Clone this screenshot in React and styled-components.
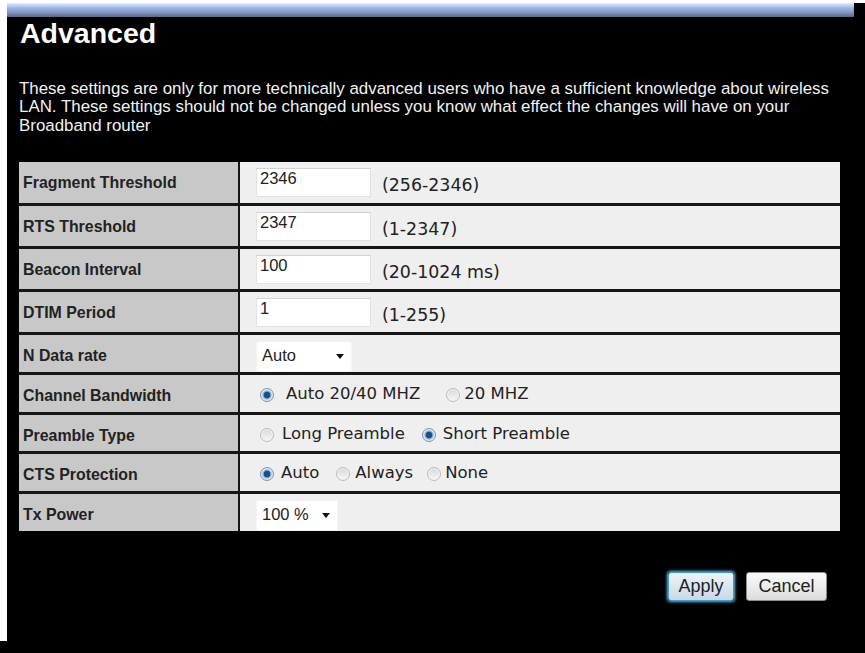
import React from "react";
import styled, { createGlobalStyle } from "styled-components";

const GlobalStyle = createGlobalStyle`
  html, body {
    margin: 0;
    padding: 0;
    background: #000;
  }
  * {
    box-sizing: border-box;
  }
`;

const ROWS = [
  { label: "Fragment Threshold", kind: "text", value: "2346", hint: "(256-2346)" },
  { label: "RTS Threshold", kind: "text", value: "2347", hint: "(1-2347)" },
  { label: "Beacon Interval", kind: "text", value: "100", hint: "(20-1024 ms)" },
  { label: "DTIM Period", kind: "text", value: "1", hint: "(1-255)" },
  { label: "N Data rate", kind: "select", value: "Auto", width: 96 },
  {
    label: "Channel Bandwidth",
    kind: "radio",
    checked: 0,
    options: [
      { text: "Auto 20/40 MHZ", lead: 0, gap: 12 },
      { text: "20 MHZ", lead: 26, gap: 4 },
    ],
  },
  {
    label: "Preamble Type",
    kind: "radio",
    checked: 1,
    options: [
      { text: "Long Preamble", lead: 0, gap: 8 },
      { text: "Short Preamble", lead: 17, gap: 7 },
    ],
  },
  {
    label: "CTS Protection",
    kind: "radio",
    checked: 0,
    options: [
      { text: "Auto", lead: 0, gap: 7 },
      { text: "Always", lead: 17, gap: 5 },
      { text: "None", lead: 14, gap: 4 },
    ],
  },
  { label: "Tx Power", kind: "select", value: "100 %", width: 82 },
];

export default function App() {
  return (
    <>
      <GlobalStyle />
      <Frame>
        <TopBar />
        <Content>
          <Title>Advanced</Title>
          <Intro>
            These settings are only for more technically advanced users who have a sufficient knowledge about wireless
            <br />
            LAN. These settings should not be changed unless you know what effect the changes will have on your
            <br />
            Broadband router
          </Intro>
          <Table>
            {ROWS.map((row) => (
              <React.Fragment key={row.label}>
                <Label>{row.label}</Label>
                <Value>
                  {row.kind === "text" && (
                    <>
                      <TextField defaultValue={row.value} />
                      <Hint>{row.hint}</Hint>
                    </>
                  )}
                  {row.kind === "select" && (
                    <SelectWrap $width={row.width}>
                      <Select defaultValue={row.value}>
                        <option>{row.value}</option>
                      </Select>
                      <Caret />
                    </SelectWrap>
                  )}
                  {row.kind === "radio" && (
                    <RadioGroup>
                      {row.options.map((opt, i) => (
                        <RadioOption key={opt.text} $lead={opt.lead} $gap={opt.gap}>
                          <Radio $checked={i === row.checked} />
                          {opt.text}
                        </RadioOption>
                      ))}
                    </RadioGroup>
                  )}
                </Value>
              </React.Fragment>
            ))}
          </Table>
          <Buttons>
            <Button $primary>Apply</Button>
            <Button>Cancel</Button>
          </Buttons>
        </Content>
      </Frame>
    </>
  );
}

const Frame = styled.div`
  width: 865px;
  height: 641px;
  border-top: 3px solid #fff;
  border-left: 7px solid #fff;
  background: #000;
  display: flex;
  flex-direction: column;
`;

const TopBar = styled.div`
  height: 14px;
  margin-right: 11px;
  background: linear-gradient(#e4ebf8 0%, #9fb6e6 35%, #8199cf 65%, #5f6678 100%);
`;

const Content = styled.div`
  padding: 0 0 0 12px;
  display: flex;
  flex-direction: column;
`;

const Title = styled.h1`
  margin: 0 0 0 1px;
  font-family: "Liberation Sans", Arial, sans-serif;
  font-weight: bold;
  font-size: 28.5px;
  line-height: 32px;
  color: #fff;
`;

const Intro = styled.p`
  margin: 31px 0 0;
  font-family: "Liberation Sans", Arial, sans-serif;
  font-size: 16.9px;
  line-height: 18.4px;
  color: #f2f2f2;
  white-space: nowrap;
`;

const Table = styled.div`
  margin-top: 27px;
  width: 821px;
  display: grid;
  grid-template-columns: 219px 1fr;
  grid-template-rows: 41px 40px 40px 40px 37px 37px 36px 37px 37px;
  column-gap: 2px;
  row-gap: 3px;
  background: #161616;
`;

const Label = styled.div`
  background: #c8c8c8;
  padding: 12px 0 0 4px;
  font-family: "Liberation Sans", Arial, sans-serif;
  font-weight: bold;
  font-size: 15.9px;
  line-height: 18px;
  color: #222;
  white-space: nowrap;
`;

const Value = styled.div`
  background: #efefef;
  display: flex;
  align-items: flex-start;
  padding: 6px 0 0 16px;
  color: #222;
`;

const TextField = styled.input`
  width: 115px;
  height: 29px;
  border: 1px solid #e2e2e2;
  border-top-color: #d2d2d2;
  background: #fff;
  padding: 0 3px 9px;
  font-family: "Liberation Sans", Arial, sans-serif;
  font-size: 16.5px;
  color: #222;
  outline: none;
`;

const Hint = styled.span`
  margin: 7px 0 0 11px;
  font-family: "DejaVu Sans", Verdana, sans-serif;
  font-size: 17.4px;
  line-height: 20px;
  color: #222;
`;

const SelectWrap = styled.div`
  position: relative;
  width: ${(p) => p.$width}px;
  height: 31px;
`;

const Select = styled.select`
  appearance: none;
  width: 100%;
  height: 100%;
  border: 1px solid #f4f4f4;
  background: #fff;
  padding: 0 0 4px 5px;
  font-family: "Liberation Sans", Arial, sans-serif;
  font-size: 16.5px;
  color: #222;
  outline: none;
`;

const Caret = styled.span`
  position: absolute;
  right: 8px;
  top: 13px;
  width: 0;
  height: 0;
  border-left: 4px solid transparent;
  border-right: 4px solid transparent;
  border-top: 5px solid #111;
  pointer-events: none;
`;

const RadioGroup = styled.div`
  display: flex;
  align-items: center;
  padding: 2px 0 0 4px;
  font-family: "DejaVu Sans", Verdana, sans-serif;
  font-size: 16.5px;
  line-height: 22px;
  color: #222;
  white-space: nowrap;
`;

const RadioOption = styled.label`
  display: flex;
  align-items: center;
  gap: ${(p) => p.$gap}px;
  margin-left: ${(p) => p.$lead}px;
`;

const Radio = styled.span`
  position: relative;
  width: 14px;
  height: 14px;
  border-radius: 50%;
  border: 1px solid ${(p) => (p.$checked ? "#7f96ad" : "#b9bcc0")};
  background: ${(p) =>
    p.$checked
      ? "radial-gradient(circle, #16508e 0 3px, #6e9dc9 3.5px, #cfdceb 5px)"
      : "linear-gradient(#d8d8d8, #f7f7f7)"};
  box-shadow: inset 0 0 0 1px ${(p) => (p.$checked ? "#dfe8f2" : "#f4f4f4")};
  margin-top: 1px;
`;

const Buttons = styled.div`
  margin-top: 41px;
  display: flex;
  justify-content: flex-end;
  gap: 12px;
  padding-right: 38px;
`;

const Button = styled.button`
  height: 29px;
  padding: 0 ${(p) => (p.$primary ? "9px" : "10px")};
  min-width: ${(p) => (p.$primary ? "66px" : "81px")};
  border-radius: 3px;
  font-family: "Liberation Sans", Arial, sans-serif;
  font-size: 18px;
  color: #222;
  border: 1px solid ${(p) => (p.$primary ? "#3f9fd3" : "#8d8d8d")};
  background: ${(p) =>
    p.$primary
      ? "linear-gradient(#eef4f8, #c8d9e4)"
      : "linear-gradient(#fbfbfb, #dcdcdc)"};
  box-shadow: ${(p) => (p.$primary ? "0 0 3px 1px #62c3ee" : "none")};
`;
